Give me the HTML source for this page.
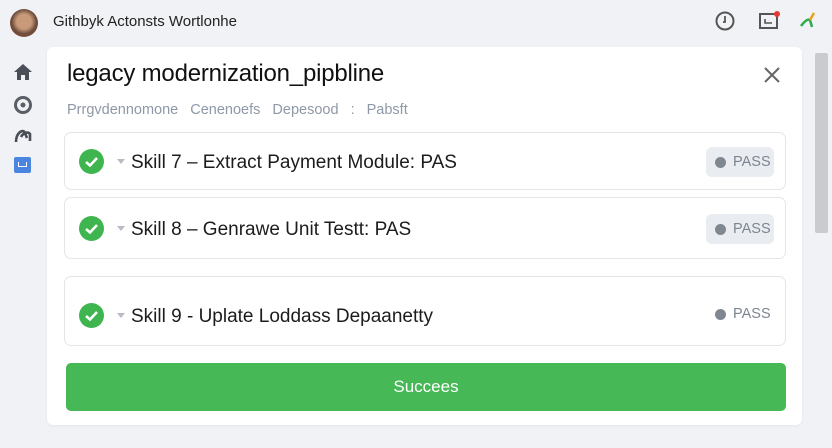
<!DOCTYPE html>
<html><head><style>
*{margin:0;padding:0;box-sizing:border-box}
body{width:832px;height:448px;background:#f1f2f5;font-family:"Liberation Sans",sans-serif;position:relative;overflow:hidden}
.abs{position:absolute}
.panel{left:47px;top:47px;width:755px;height:378px;background:#fff;border-radius:6px;box-shadow:0 1px 3px rgba(0,0,0,.06)}
.row{position:absolute;left:64px;width:722px;border:1px solid #e3e5e8;border-radius:7px;background:#fff}
.chk{position:absolute;left:14px;width:25px;height:25px;border-radius:50%;background:#3fb54f}
.chk svg{position:absolute;left:5px;top:6px}
.tri{position:absolute;left:52px;width:0;height:0;border-left:4px solid transparent;border-right:4px solid transparent;border-top:5px solid #b8bcc4}
.lbl{position:absolute;left:66px;font-size:19px;color:#1c1c1c}
.pass{position:absolute;right:11px;width:68px;height:30px;border-radius:6px;background:#e9ecf0;color:#7d8590;font-size:14.5px;line-height:30px;padding-left:27px;white-space:nowrap}
.pass:before{content:"";position:absolute;left:9px;top:10px;width:11px;height:11px;border-radius:50%;background:#7f8791}
</style></head><body>
<div class="abs" style="left:10px;top:9px;width:28px;height:28px;border-radius:50%;background:radial-gradient(circle at 50% 45%,#c89a7a 0 35%,#6b4a3a 60%,#a0553e)"></div>
<div class="abs" style="left:53px;top:13px;font-size:15px;color:#222">Githbyk Actonsts Wortlonhe</div>
<svg class="abs" style="left:714px;top:10px" width="22" height="22" viewBox="0 0 22 22"><circle cx="11" cy="11" r="8.5" fill="none" stroke="#555" stroke-width="2"/><path d="M11 6v6h-2" stroke="#555" stroke-width="1.8" fill="none"/></svg>
<svg class="abs" style="left:758px;top:10px" width="24" height="22" viewBox="0 0 24 22"><rect x="2" y="4" width="17" height="14" fill="none" stroke="#555" stroke-width="2"/><path d="M7 9v4h7" stroke="#555" stroke-width="1.6" fill="none"/><circle cx="19" cy="4" r="3" fill="#e53935"/></svg>
<svg class="abs" style="left:798px;top:9px" width="22" height="22" viewBox="0 0 22 22"><path d="M3 17 Q9 9 12 11 L14 18" stroke="#2eaa50" stroke-width="2.5" fill="none"/><path d="M12 11 L16 4" stroke="#e8a020" stroke-width="2.5"/></svg>
<svg class="abs" style="left:13px;top:63px" width="20" height="18" viewBox="0 0 20 18"><path d="M10 1 L1 9 H4 V17 H8 V12 H12 V17 H16 V9 H19Z" fill="#4a4f57"/></svg>
<svg class="abs" style="left:13px;top:95px" width="20" height="20"><circle cx="10" cy="10" r="7.5" fill="none" stroke="#5a5f67" stroke-width="3"/><circle cx="10" cy="10" r="2.5" fill="#5a5f67"/></svg>
<svg class="abs" style="left:13px;top:125px" width="20" height="20"><path d="M3 17 C3 8 10 3 12 8 L14 13 M8 12 C10 8 15 6 17 9 L17 16" stroke="#4a4f57" stroke-width="2.6" fill="none"/></svg>
<div class="abs" style="left:14px;top:157px;width:17px;height:16px;background:#4a86e0;border-radius:2px"><div style="position:absolute;left:4px;top:5px;width:9px;height:5px;border:1.5px solid #fff;border-top:none"></div></div>
<div class="abs" style="left:815px;top:53px;width:13px;height:180px;background:#c9cbce;border-radius:2px"></div>
<div class="abs panel"></div>
<div class="abs" style="left:67px;top:60px;font-size:24px;color:#111;letter-spacing:-.2px">legacy modernization_pipbline</div>
<svg class="abs" style="left:762px;top:65px" width="20" height="20"><path d="M3 3 L17 17 M17 3 L3 17" stroke="#666" stroke-width="2"/></svg>
<div class="abs" style="left:67px;top:102px;font-size:14.5px;color:#8f98a6;word-spacing:8px">Prrgvdennomone Cenenoefs Depesood&nbsp;:&nbsp;Pabsft</div>
<div class="row" style="top:132px;height:58px"><div class="chk" style="top:16px"><svg width="15" height="13"><path d="M2 7 L6 10.5 L13 3" stroke="#fff" stroke-width="2.6" fill="none"/></svg></div><div class="tri" style="top:26px"></div><div class="lbl" style="top:19px">Skill 7 – Extract Payment Module: PAS</div><div class="pass" style="top:14px">PASS</div></div>
<div class="row" style="top:197px;height:62px"><div class="chk" style="top:18px"><svg width="15" height="13"><path d="M2 7 L6 10.5 L13 3" stroke="#fff" stroke-width="2.6" fill="none"/></svg></div><div class="tri" style="top:28px"></div><div class="lbl" style="top:21px">Skill 8 – Genrawe Unit Testt: PAS</div><div class="pass" style="top:16px">PASS</div></div>
<div class="row" style="top:276px;height:70px"><div class="chk" style="top:26px"><svg width="15" height="13"><path d="M2 7 L6 10.5 L13 3" stroke="#fff" stroke-width="2.6" fill="none"/></svg></div><div class="tri" style="top:36px"></div><div class="lbl" style="top:29px">Skill 9 - Uplate Loddass Depaanetty</div><div class="pass" style="top:22px;background:#fff">PASS</div></div>
<div class="abs" style="left:66px;top:363px;width:720px;height:48px;background:#47b856;border-radius:5px;color:#fff;font-size:17px;text-align:center;line-height:48px">Succees</div>
</body></html>
